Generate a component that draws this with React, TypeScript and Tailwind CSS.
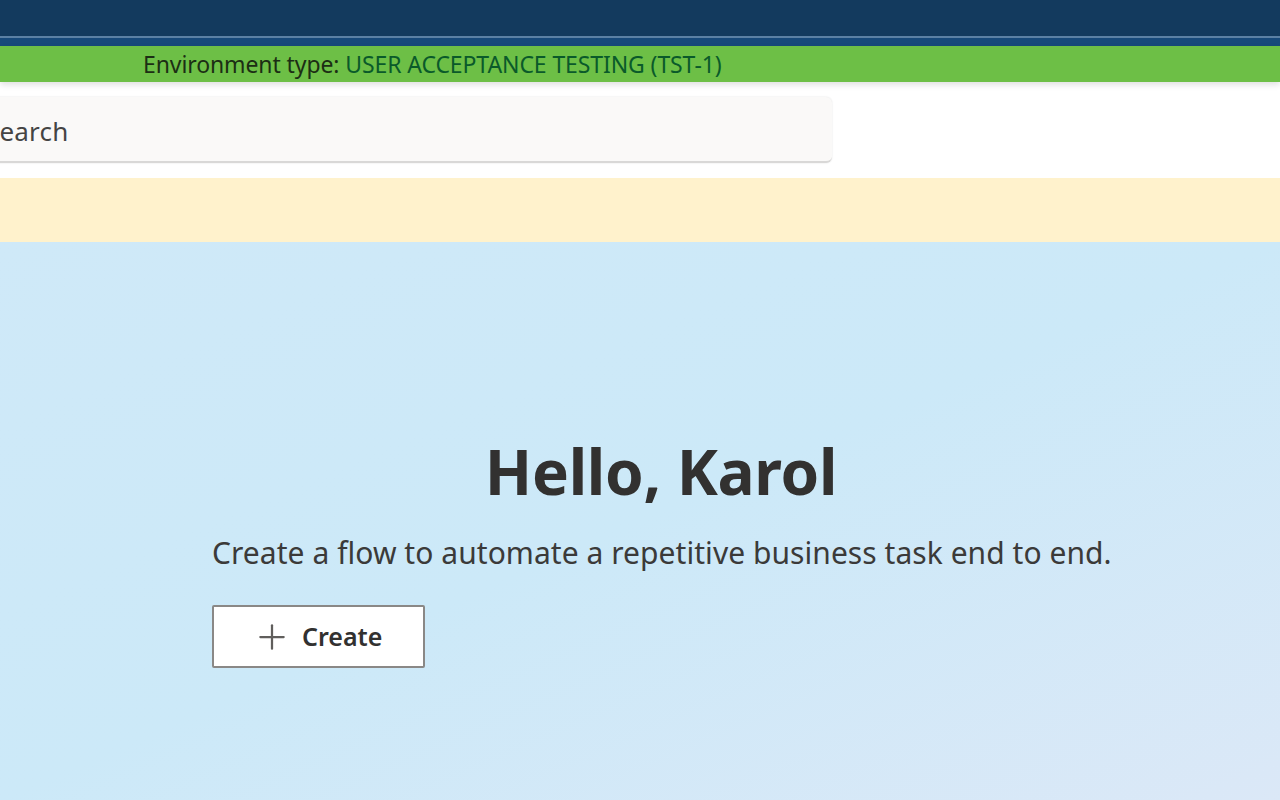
import { Plus } from "lucide-react";

const App = () => {
  return (
    <div
      className="w-[1280px] h-[800px] overflow-hidden flex flex-col bg-white"
      style={{ fontFamily: "'Noto Sans', 'Open Sans', sans-serif" }}
    >
      {/* top app bar */}
      <div className="h-[36px] bg-[#133a5e] shrink-0" />
      <div className="h-[2px] bg-[#5b80a4] shrink-0" />
      <div className="h-[8px] bg-[#17497a] shrink-0" />

      {/* environment banner */}
      <div className="h-[36px] bg-[#6dbf46] shrink-0 flex items-center pl-[143px] shadow-[0_3px_6px_rgba(0,0,0,0.12)] relative z-10">
        <span className="text-[23px] leading-none tracking-[-0.1px] text-[#1c2e14]">
          Environment type:{" "}
          <span className="text-[#0a5a2a]">USER ACCEPTANCE TESTING (TST-1)</span>
        </span>
      </div>

      {/* search row */}
      <div className="h-[96px] shrink-0 flex items-center">
        <div className="-ml-[26px] w-[858px] h-[66px] bg-[#faf9f8] rounded-[6px] border-b-2 border-[#d9d8d7] shadow-[0_0_2px_rgba(0,0,0,0.12)] flex items-center pl-[11px] pt-[4px]">
          <span className="text-[26px] text-[#444] leading-none tracking-[0.2px]">Search</span>
        </div>
      </div>

      {/* notice bar */}
      <div className="h-[64px] shrink-0 bg-[#fff2cc]" />

      {/* hero */}
      <div className="flex-1 bg-gradient-to-br from-[#cfe9f8] via-[#cce9f8] to-[#dbe8f7]">
        <div className="ml-[212px] w-[898px] pt-[198px] flex flex-col">
          <h1 className="text-center text-[62px] font-bold leading-none text-[#323130] tracking-[-0.3px]">
            Hello, Karol
          </h1>
          <p className="mt-[36px] text-[30px] leading-none text-[#3b3a39] whitespace-nowrap tracking-[0.05px]">
            Create a flow to automate a repetitive business task end to end.
          </p>
          <button className="mt-[37px] w-[213px] h-[63px] bg-white border-2 border-[#8a8886] rounded-[2px] flex items-center pl-[38px] gap-[10px]">
            <Plus className="w-[40px] h-[40px] text-[#605e5c]" strokeWidth={1.35} />
            <span className="text-[25px] font-semibold text-[#323130] leading-none">Create</span>
          </button>
        </div>
      </div>
    </div>
  );
};

export default App;
